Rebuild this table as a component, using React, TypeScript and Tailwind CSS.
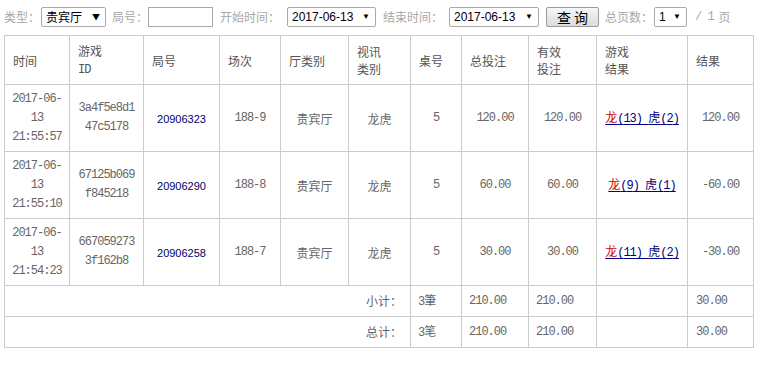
import React from 'react';

const cjk = "font-['Noto_Sans_CJK_SC',sans-serif]";
const mono = "font-['Liberation_Mono',monospace] text-[12px] tracking-[-1px]";
const arial = "font-['Liberation_Sans',sans-serif]";

const rows = [
  {
    time: ['2017-06-', '13', '21:55:57'],
    id: ['3a4f5e8d1', '47c5178'],
    round: '20906323',
    session: '188-9',
    bet: '120.00',
    valid: '120.00',
    dragon: 13,
    tiger: 2,
    result: '120.00'
  },
  {
    time: ['2017-06-', '13', '21:55:10'],
    id: ['67125b069', 'f845218'],
    round: '20906290',
    session: '188-8',
    bet: '60.00',
    valid: '60.00',
    dragon: 9,
    tiger: 1,
    result: '-60.00'
  },
  {
    time: ['2017-06-', '13', '21:54:23'],
    id: ['667059273', '3f162b8'],
    round: '20906258',
    session: '188-7',
    bet: '30.00',
    valid: '30.00',
    dragon: 11,
    tiger: 2,
    result: '-30.00'
  }
];

const widths = [65, 74, 76, 61, 68, 62, 51, 67, 68, 91, 66];

const Select = ({ value, width, font }: { value: string; width: string; font: string }) => (
  <div
    className={`${width} h-[20px] flex items-center justify-between border border-[#a9a9a9] rounded-[2px] bg-white pl-[4px] pr-[5px] text-[12px] text-black ${font}`}
  >
    <span>{value}</span>
    <span className="text-[8px]">▼</span>
  </div>
);

const Label = ({ text, className }: { text: string; className: string }) => (
  <span className={`text-[12px] text-[#a8a8a8] whitespace-nowrap ${className}`}>{text}</span>
);

const App = () => {
  const th = 'border border-[#cccccc] pl-[8px] text-left align-middle font-normal';
  const td = 'border border-[#cccccc] text-center align-middle';

  return (
    <div className={`w-[762px] h-[365px] bg-white ${cjk}`}>
      {/* Toolbar */}
      <div className="flex items-center h-[35px] pl-[4px] pb-[1px]">
        <Label text="类型：" className="w-[37px]" />
        <Select value="贵宾厅" width="w-[65px]" font={cjk} />
        <Label text="局号：" className="ml-[6px] w-[36px]" />
        <div className="w-[65px] h-[20px] border border-[#a9a9a9] bg-white" />
        <Label text="开始时间：" className="ml-[7px] w-[67px]" />
        <Select value="2017-06-13" width="w-[89px]" font={arial} />
        <Label text="结束时间：" className="ml-[7px] w-[66px]" />
        <Select value="2017-06-13" width="w-[90px]" font={arial} />
        <button className="ml-[7px] w-[53px] h-[20px] border border-[#9a9a9a] rounded-[2px] bg-gradient-to-b from-[#f6f6f6] to-[#dcdcdc] text-[14px] leading-none text-black">
          查 询
        </button>
        <Label text="总页数：" className="ml-[6px] w-[49px]" />
        <Select value="1" width="w-[33px]" font={arial} />
        <span className={`ml-[8px] text-[#a8a8a8] ${mono}`}>/ 1</span>
        <span className="ml-[5px] text-[12px] text-[#a8a8a8]">页</span>
      </div>

      {/* Table */}
      <div className="pl-[4px]">
        <table className="w-[749px] border-collapse table-fixed text-[12px] text-[#666666]">
          <colgroup>
            {widths.map((w, i) => (
              <col key={i} style={{ width: w }} />
            ))}
          </colgroup>
          <thead>
            <tr className="h-[49px] text-[#555555] leading-[17px]">
              <th className={th}>时间</th>
              <th className={th}>
                游戏
                <br />
                <span className={mono}>ID</span>
              </th>
              <th className={th}>局号</th>
              <th className={th}>场次</th>
              <th className={th}>厅类别</th>
              <th className={th}>
                视讯
                <br />
                类别
              </th>
              <th className={th}>桌号</th>
              <th className={th}>总投注</th>
              <th className={th}>
                有效
                <br />
                投注
              </th>
              <th className={th}>
                游戏
                <br />
                结果
              </th>
              <th className={th}>结果</th>
            </tr>
          </thead>
          <tbody>
            {rows.map((r, i) => (
              <tr key={i} className="h-[67px] leading-[19px]">
                <td className={`${td} ${mono}`}>
                  {r.time.map((t, j) => (
                    <div key={j}>{t}</div>
                  ))}
                </td>
                <td className={`${td} ${mono}`}>
                  {r.id.map((t, j) => (
                    <div key={j}>{t}</div>
                  ))}
                </td>
                <td className={td}>
                  <a className={`text-[#000066] text-[11px] ${arial}`}>{r.round}</a>
                </td>
                <td className={`${td} ${mono}`}>{r.session}</td>
                <td className={td}>贵宾厅</td>
                <td className={td}>龙虎</td>
                <td className={`${td} ${mono}`}>5</td>
                <td className={`${td} ${mono}`}>{r.bet}</td>
                <td className={`${td} ${mono}`}>{r.valid}</td>
                <td className={td}>
                  <a className="text-[#000080] underline underline-offset-2">
                    <span className="text-[#cc0000]">龙</span>
                    <span className={mono}>({r.dragon}) </span>虎<span className={mono}>({r.tiger})</span>
                  </a>
                </td>
                <td className={`${td} ${mono}`}>{r.result}</td>
              </tr>
            ))}
            {['小计：', '总计：'].map((label, i) => (
              <tr key={label} className="h-[31px]">
                <td colSpan={6} className="border border-[#cccccc] text-right pr-[8px] align-middle">
                  {label}
                </td>
                <td className="border border-[#cccccc] pl-[7px] align-middle">
                  <span className={mono}>3</span>
                  {i === 0 ? '筆' : '笔'}
                </td>
                <td className={`border border-[#cccccc] pl-[7px] align-middle ${mono}`}>210.00</td>
                <td className={`border border-[#cccccc] pl-[7px] align-middle ${mono}`}>210.00</td>
                <td className="border border-[#cccccc]" />
                <td className={`border border-[#cccccc] pl-[8px] align-middle ${mono}`}>30.00</td>
              </tr>
            ))}
          </tbody>
        </table>
      </div>
    </div>
  );
};

export default App;
